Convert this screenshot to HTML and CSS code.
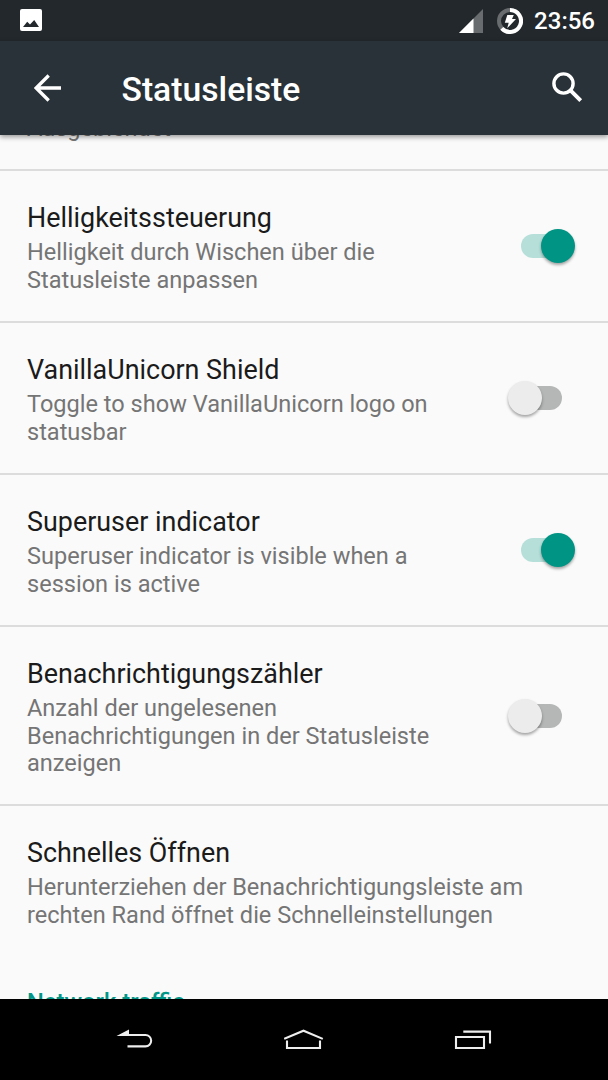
FILE: index.html
```html
<!DOCTYPE html>
<html lang="de">
<head>
  <meta charset="UTF-8">
  <meta name="viewport" content="width=device-width, initial-scale=1.0">
  <title>Statusleiste</title>
  <link rel="stylesheet" href="styles.css">
</head>
<body>

  <!-- System status bar -->
  <div class="status-bar">
    <svg class="picture-icon" width="22" height="22" viewBox="0 0 22 22">
      <rect width="22" height="22" rx="2" fill="#fff"/>
      <path d="M3 18L7.2 12.7L10 15.6L14.2 11L19 18Z" fill="#22282c"/>
    </svg>
    <div class="status-right">
      <svg class="signal-icon" width="24" height="24" viewBox="0 0 24 24">
        <path d="M0 24L24 0V24Z" fill="#696c6e"/>
        <path d="M0 24L14.5 9.5V24Z" fill="#fff"/>
      </svg>
      <svg class="battery-icon" width="26" height="26" viewBox="0 0 26 26">
        <circle cx="13" cy="13" r="11" fill="none" stroke="#696c6e" stroke-width="4"/>
        <path d="M13 2A11 11 0 1 1 4.8 20.3" fill="none" stroke="#fff" stroke-width="4"/>
        <path d="M10.3 7H16.8L15 11.1H19L10.2 20.3L11.7 14.8H7.8Z" fill="#fff"/>
      </svg>
      <span class="clock">23:56</span>
    </div>
  </div>

  <div class="toolbar">
    <svg class="back-icon" width="28" height="28" viewBox="0 0 28 28">
      <path d="M27 14H2.5M14.7 1.5L2.2 14L14.7 26.5" fill="none" stroke="#fff" stroke-width="3.3"/>
    </svg>
    <h1>Statusleiste</h1>
    <svg class="search-icon" width="31" height="31" viewBox="0 0 31 31">
      <circle cx="11.5" cy="11.5" r="9.6" fill="none" stroke="#fff" stroke-width="3.4"/>
      <path d="M18.7 18.7L28.7 28.7" stroke="#fff" stroke-width="4"/>
    </svg>
  </div>

  <!-- Scrolled settings list -->
  <div class="settings">
    <div class="item item-first">
      <p>Ausgeblendet</p>
    </div>
    <div class="item">
      <div class="text">
        <h2>Helligkeitssteuerung</h2>
        <p>Helligkeit durch Wischen über die<br>Statusleiste anpassen</p>
      </div>
      <div class="switch on"><span class="thumb"></span></div>
    </div>
    <div class="item">
      <div class="text">
        <h2>VanillaUnicorn Shield</h2>
        <p>Toggle to show VanillaUnicorn logo on<br>statusbar</p>
      </div>
      <div class="switch"><span class="thumb"></span></div>
    </div>
    <div class="item">
      <div class="text">
        <h2>Superuser indicator</h2>
        <p>Superuser indicator is visible when a<br>session is active</p>
      </div>
      <div class="switch on"><span class="thumb"></span></div>
    </div>
    <div class="item item-tall">
      <div class="text">
        <h2>Benachrichtigungszähler</h2>
        <p>Anzahl der ungelesenen<br>Benachrichtigungen in der Statusleiste<br>anzeigen</p>
      </div>
      <div class="switch"><span class="thumb"></span></div>
    </div>
    <div class="item item-last">
      <div class="text">
        <h2>Schnelles Öffnen</h2>
        <p>Herunterziehen der Benachrichtigungsleiste am<br>rechten Rand öffnet die Schnelleinstellungen</p>
      </div>
    </div>
    <h3>Network traffic</h3>
  </div>

  <!-- Navigation keys -->
  <div class="nav-bar">
    <svg width="38" height="22" viewBox="0 0 38 22">
      <path d="M0.5 7L13 0.5V5H29.5A6.7 6.7 0 0 1 29.5 18.4H11.5V16.3H29.5A4.6 4.6 0 0 0 29.5 7Z" fill="#eee"/>
    </svg>
    <svg width="40" height="22" viewBox="0 0 40 22">
      <path d="M0.2 9.9L19.5 1.7L38.8 9.9M3 11.5V19H36V11.5" fill="none" stroke="#eee" stroke-width="2.1"/>
    </svg>
    <svg width="38" height="22" viewBox="0 0 38 22">
      <path d="M2 8H30V19H2ZM9.3 2.6H36V14.5" fill="none" stroke="#eee" stroke-width="2.1"/>
    </svg>
  </div>

</body>
</html>
```
FILE: styles.css
```css
* {
  box-sizing: border-box;
}
body {
  margin: 0;
  height: 1080px;
  display: flex;
  flex-direction: column;
  overflow: hidden;
  background-color: #fafafa;
  font-family: Roboto, "Liberation Sans", sans-serif;
}
h1, h2, h3, p {
  margin: 0;
  font-weight: 400;
  white-space: nowrap;
}
svg {
  display: block;
  flex: none;
}
.status-bar {
  height: 41px;
  flex: none;
  display: flex;
  align-items: center;
  justify-content: space-between;
  padding: 0 13px 0 19.5px;
  background-color: #22282c;
}
.picture-icon {
  margin-bottom: 1px;
}
.status-right {
  display: flex;
  align-items: center;
}
.battery-icon {
  margin-left: 14px;
}
.clock {
  margin-left: 11.5px;
  color: #fff;
  font-size: 24px;
  font-weight: 500;
  line-height: 40px;
}
.toolbar {
  height: 94px;
  flex: none;
  display: flex;
  align-items: center;
  padding: 0 25px 0 34px;
  background-color: #283238;
  box-shadow: 0 2px 5px rgba(0, 0, 0, 0.4);
  z-index: 1;
}
.toolbar h1 {
  flex: 1;
  margin-left: 59.5px;
  padding-top: 3px;
  color: #fff;
  font-size: 33.7px;
  font-weight: 500;
  line-height: 40px;
}
.search-icon {
  margin-bottom: 1px;
}
.settings {
  flex: 1;
  min-height: 0;
  overflow: hidden;
}
.item {
  display: flex;
  justify-content: space-between;
  height: 152px;
  padding: 31px 33px 0 27px;
  border-bottom: 2px solid #dcdcdc;
}
.item-first {
  height: 36px;
  padding-top: 0;
}
.item-first p {
  margin-top: -20px; /* scrolled under the toolbar */
}
.item-tall {
  height: 179px;
}
.item-last {
  border-bottom: 0;
}
.item h2 {
  margin-bottom: 5px;
  color: #1b1b1b;
  font-size: 26.9px;
  line-height: 32px;
}
.item p {
  color: #757575;
  font-size: 23.56px;
  line-height: 27.7px;
}
/* Track with the thumb hanging over one end */
.switch {
  align-self: center;
  display: flex;
  align-items: center;
  width: 41px;
  height: 24px;
  margin-right: 13px;
  margin-bottom: 31px;
  border-radius: 12px;
  background-color: #b5b6b6;
}
.thumb {
  flex: none;
  width: 34px;
  height: 34px;
  margin-left: -13px;
  border-radius: 50%;
  background-color: #ececec;
  box-shadow: 0 2px 3px rgba(0, 0, 0, 0.35);
}
.switch.on {
  justify-content: flex-end;
  background-color: #b6dfda;
}
.switch.on .thumb {
  margin-left: 0;
  margin-right: -13px;
  background-color: #009485;
}
.settings h3 {
  padding-left: 27px;
  margin-top: 30px;
  color: #009688;
  font-size: 23.75px;
  font-weight: 500;
  line-height: 28px;
}
.nav-bar {
  height: 81px;
  flex: none;
  display: flex;
  align-items: center;
  justify-content: space-between;
  padding: 0 116px;
  background-color: #000;
}
```
